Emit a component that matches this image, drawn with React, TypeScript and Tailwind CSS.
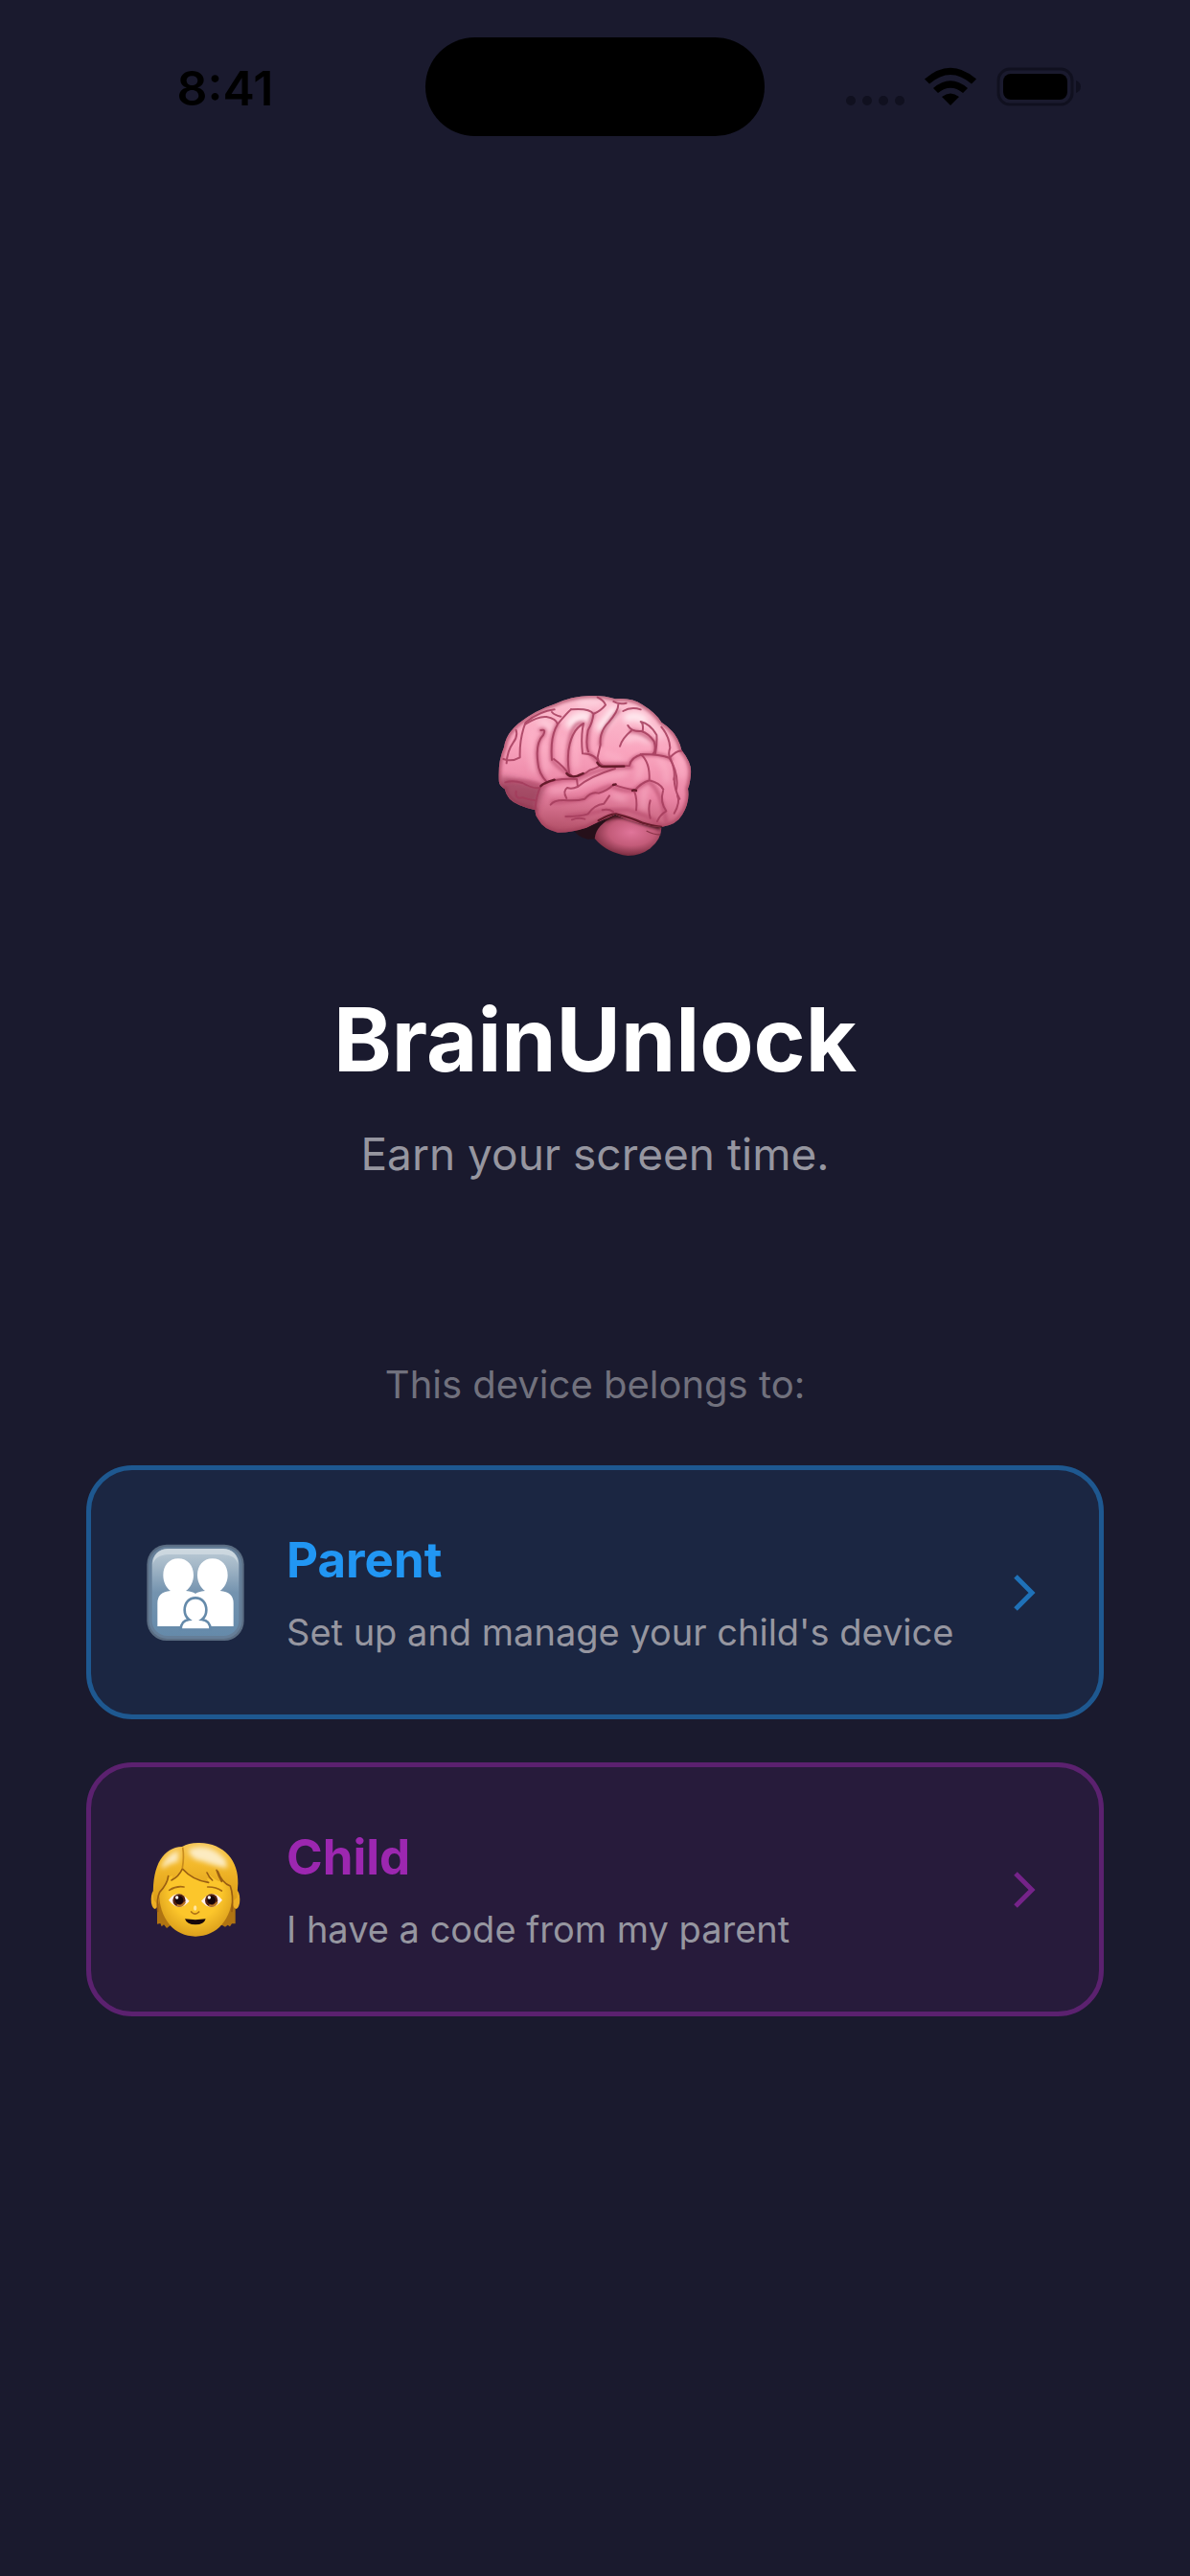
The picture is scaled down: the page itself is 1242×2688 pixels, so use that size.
import type { ReactNode } from "react";

const roles = [
  {
    id: "parent",
    title: "Parent",
    subtitle: "Set up and manage your child's device",
    icon: <FamilyIcon />,
    card: "border-[#1e5890] bg-[#1b2642]",
    titleColor: "text-[#2196f3]",
    chevronColor: "text-[#1f71b8]",
  },
  {
    id: "child",
    title: "Child",
    subtitle: "I have a code from my parent",
    icon: <ChildIcon />,
    card: "border-[#5b216f] bg-[#271b3b]",
    titleColor: "text-[#9c27b0]",
    chevronColor: "text-[#752389]",
  },
];

function StatusBar() {
  return (
    <header className="grid h-[180px] grid-cols-[1fr_354px_1fr] items-center text-black">
      <div className="pt-[3px] pl-[26px] text-center text-[50px] leading-[60px] font-semibold">8:41</div>
      <div className="h-[103px] rounded-full bg-black" />
      <div className="flex items-center justify-end pr-[113px]">
        <svg className="h-[42px] w-[248px]" viewBox="0 0 248 42" aria-hidden="true">
          {/* Signal */}
          <g fill="#10101f">
            <circle cx="7" cy="36" r="5" />
            <circle cx="24" cy="36" r="5" />
            <circle cx="41" cy="36" r="5" />
            <circle cx="58" cy="36" r="5" />
          </g>
          {/* Wifi */}
          <path d="M84 13.500Q111 -10 138 13.500L133 18.500Q111 -0.500 89 18.500Z" />
          <path d="M93 23Q111 7.500 129 23L124 28Q111 17.500 98 28Z" />
          <path d="M102 32Q111 25 120 32L111 41Z" />
          {/* Battery */}
          <rect x="161" y="3" width="77" height="37" rx="12" fill="none" stroke="#10101f" strokeWidth="3" />
          <rect x="166" y="8" width="67" height="27" rx="8" />
          <path d="M242 15Q247 17 247 21.500Q247 26 242 28Z" fill="#10101f" />
        </svg>
      </div>
    </header>
  );
}

function BrainIcon() {
  return (
    <svg className="h-[170px] w-[204px]" viewBox="61 74 612 510" role="img" aria-label="Brain">
      <defs>
        <linearGradient id="cortex" x1="0.55" y1="0" x2="0.45" y2="1">
          <stop offset="0" stopColor="#fcc3d3" />
          <stop offset="0.35" stopColor="#f9a3bd" />
          <stop offset="0.6" stopColor="#ea85a5" />
          <stop offset="0.82" stopColor="#b9566f" />
          <stop offset="1" stopColor="#7d2f43" />
        </linearGradient>
        <radialGradient id="cerebellum" cx="0.55" cy="0.4" r="0.62">
          <stop offset="0" stopColor="#e0759a" />
          <stop offset="0.55" stopColor="#c35b79" />
          <stop offset="1" stopColor="#74283b" />
        </radialGradient>
        <filter id="soft" x="-30%" y="-30%" width="160%" height="160%">
          <feGaussianBlur stdDeviation="9" />
        </filter>
        <filter id="softer" x="-30%" y="-30%" width="160%" height="160%">
          <feGaussianBlur stdDeviation="5" />
        </filter>
        <filter id="fold" x="-10%" y="-10%" width="120%" height="120%">
          <feGaussianBlur stdDeviation="2" />
        </filter>
        <clipPath id="cortexClip">
          <path d="M66 345Q62 285 82 238Q88 196 128 163Q180 122 240 103Q295 78 350 77Q400 76 430 87Q482 82 515 105Q556 130 575 160Q625 190 638 247Q672 290 667 322Q665 350 658 368Q665 410 640 450Q622 482 575 488Q510 485 430 448Q380 470 340 490Q290 506 250 505Q205 495 190 465Q178 450 180 435Q120 420 100 400Q85 380 86 370Q68 360 66 345Z" />
        </clipPath>
      </defs>
      <path d="M300 495Q310 520 345 526L385 525L430 450L350 470Z" fill="#26101a" />
      <path d="M366 524Q370 480 430 455Q505 460 575 490Q575 525 540 555Q510 578 470 578Q405 570 366 524Z" fill="url(#cerebellum)" />
      <path d="M400 465Q430 445 480 462Q530 480 572 490" stroke="#4a1520" strokeWidth="13" fill="none" filter="url(#softer)" />
      <path d="M528 500Q550 512 572 512" stroke="#8b3549" strokeWidth="4" fill="none" />
      <g clipPath="url(#cortexClip)">
        <rect x="60" y="70" width="620" height="515" fill="url(#cortex)" />
        {/* Edge shade */}
        <path d="M66 345Q62 285 82 238Q88 196 128 163Q180 122 240 103Q295 78 350 77Q400 76 430 87Q482 82 515 105Q556 130 575 160Q625 190 638 247Q672 290 667 322Q665 350 658 368Q665 410 640 450Q622 482 575 488Q510 485 430 448Q380 470 340 490Q290 506 250 505Q205 495 190 465Q178 450 180 435Q120 420 100 400Q85 380 86 370Q68 360 66 345Z" fill="none" stroke="#a43f5c" strokeWidth="17" opacity="0.65" filter="url(#softer)" />
        <path d="M70 330Q140 340 210 360L180 440Q100 430 75 370Z" fill="#7c2b43" opacity="0.6" filter="url(#soft)" />
        {/* Highlights */}
        <g fill="none" stroke="#ffe9ef" strokeLinecap="round" filter="url(#soft)">
          <path d="M290 165Q310 135 340 142M385 175L425 125M470 145Q500 135 520 152" strokeWidth="30" />
          <path d="M195 160Q225 155 228 185M320 100L380 98M465 215Q505 195 530 220M540 165L575 205" strokeWidth="14" opacity="0.65" />
        </g>
        <g fill="none" stroke="#ffc0d2" strokeLinecap="round" filter="url(#soft)" opacity="0.6">
          <path d="M170 190Q160 250 175 310M210 230L215 310M263 210L262 280M305 210L308 300M400 260L450 275M230 375Q320 365 365 340L460 320" strokeWidth="14" />
          <path d="M510 285Q515 315 500 335M570 280Q595 300 590 345M525 370Q515 400 520 430M425 390L460 400M635 275L640 330" strokeWidth="14" />
        </g>
        {/* Shadow beside the folds */}
        <g fill="none" stroke="#b54a6b" strokeWidth="14" strokeLinecap="round" strokeLinejoin="round" opacity="0.55" filter="url(#softer)">
          <path d="M95 345Q150 340 205 362Q245 335 310 338Q380 300 480 300" />
          <path d="M197 185Q215 180 205 200Q180 225 188 285Q190 320 217 348" />
          <path d="M250 166Q226 205 232 278Q250 300 286 325Q275 260 292 200Q305 155 331 164" />
          <path d="M362 134Q337 200 346 252L380 290Q380 295 475 292Q480 270 515 262Q570 255 605 275" />
          <path d="M480 187Q512 188 552 220Q560 250 548 260M384 230Q380 190 440 125" />
          <path d="M235 410Q280 410 330 400Q370 375 415 360Q470 380 490 372Q520 350 537 345" />
          <path d="M590 470Q570 370 540 350M280 455Q340 450 400 435L470 435Q530 450 570 480" />
        </g>
        {/* Folds */}
        <g fill="none" stroke="#a43c5c" strokeWidth="6" strokeLinecap="round" strokeLinejoin="round" opacity="0.85" filter="url(#fold)">
          <path d="M80 275Q105 285 132 270Q130 210 150 160Q195 125 240 120M120 185Q126 205 110 225Q92 250 90 288" />
          <path d="M197 185Q215 180 205 200Q180 225 188 285Q190 320 217 348" />
          <path d="M150 165Q190 140 215 143Q245 148 250 166Q226 205 232 278M250 166Q280 130 292 120M232 128Q240 138 260 142" />
          <path d="M238 275Q272 300 286 325" />
          <path d="M331 164Q300 180 288 228Q278 265 286 320Q305 345 350 310Q385 300 382 292M331 164Q322 205 328 258Q370 258 382 292" />
          <path d="M292 120Q350 115 362 134Q385 125 400 106Q395 92 375 82M362 134Q360 160 345 185Q337 230 346 252" />
          <path d="M440 105Q440 125 410 160Q380 190 384 230L375 270Q378 295 400 297L475 296Q478 270 515 260Q570 260 602 272Q620 310 614 340" />
          <path d="M425 95Q440 105 465 100M455 125Q480 110 510 120" />
          <path d="M470 170Q480 190 512 188Q535 195 552 220Q560 250 548 260" />
          <path d="M480 187Q452 210 445 235M516 188Q520 165 510 158Q540 165 560 200Q562 225 556 258" />
          <path d="M575 175Q600 205 602 240Q595 260 602 270Q625 245 640 250M600 272Q630 320 622 370" />
          <path d="M510 260Q540 285 537 342Q570 350 581 370M537 342Q510 350 490 376Q500 400 496 435M615 335Q615 370 632 400" />
          <path d="M86 348Q110 340 140 350Q175 370 195 365Q183 390 180 430M120 376Q115 402 142 396Q163 404 183 405" />
          <path d="M212 352Q240 335 310 338L313 362Q350 330 430 305M312 362Q295 370 280 365Q265 375 278 398" />
          <path d="M228 418Q240 403 270 404Q310 407 335 400Q355 375 378 382Q404 375 425 355Q460 368 490 372" />
          <path d="M275 455Q320 455 345 447Q365 418 395 415L412 390M295 465Q315 457 335 463M390 435Q410 430 424 440" />
          <path d="M540 405Q532 430 540 460M580 375Q570 410 590 438Q570 450 562 470M625 390Q635 410 615 445" />
        </g>
        {/* Deep creases */}
        <g fill="none" stroke="#651a2c" strokeWidth="7" strokeLinecap="round" strokeLinejoin="round" filter="url(#fold)">
          <path d="M197 360Q205 350 240 340M278 320Q290 335 312 328L330 320M374 286Q381 300 398 299L458 298" />
          <path d="M424 356L432 354M484 374Q490 370 496 374" />
          <path d="M378 468Q410 448 432 447Q480 458 515 475Q540 483 575 488" />
        </g>
      </g>
    </svg>
  );
}

function FamilyIcon() {
  return (
    <svg className="h-[102px] w-[104px]" viewBox="34 34 312 306" aria-hidden="true">
      <defs>
        <linearGradient id="tile" x1="0" y1="0" x2="0" y2="1">
          <stop offset="0" stopColor="#bccbd6" />
          <stop offset="0.2" stopColor="#a3b7c7" />
          <stop offset="0.5" stopColor="#7493af" />
          <stop offset="1" stopColor="#658aaa" />
        </linearGradient>
      </defs>
      <rect x="38" y="36" width="304" height="301" rx="62" fill="#5a6c82" />
      <rect x="44" y="42" width="292" height="289" rx="58" fill="#657e98" />
      <rect x="54" y="49" width="272" height="273" rx="48" fill="url(#tile)" />
      <path d="M57 98Q58 52 105 50H275Q322 52 323 98Q318 70 275 67H105Q64 69 57 98Z" fill="#d3dce3" opacity="0.75" />
      <g fill="#fff">
        <path d="M136 80C166 80 184 103 184 132C184 153 174 171 160 181Q183 184 190 190Q197 184 220 181C206 171 196 153 196 132C196 103 214 80 243 80C273 80 291 103 291 132C291 153 281 171 267 181Q309 184 309 219V292H71V219Q71 184 112 181C98 171 89 153 89 132C89 103 107 80 136 80Z" />
        <path d="M190 203C210 203 224 218 224 241C224 254 218 265 210 271Q237 274 237 303H144Q144 274 170 271C162 265 156 254 156 241C156 218 170 203 190 203Z" stroke="#658aaa" strokeWidth="8" />
      </g>
      <path d="M138 302H242" stroke="#658aaa" strokeWidth="3" />
    </svg>
  );
}

function ChildIcon() {
  return (
    <svg className="h-[104px] w-[104px]" viewBox="34 42 312 312" aria-hidden="true">
      <defs>
        <radialGradient id="face" cx="0.5" cy="0.42" r="0.58">
          <stop offset="0.6" stopColor="#fcc62b" />
          <stop offset="1" stopColor="#dca01c" />
        </radialGradient>
        <linearGradient id="hair" x1="0" y1="0" x2="0" y2="1">
          <stop offset="0" stopColor="#f6c655" />
          <stop offset="0.35" stopColor="#f3b92b" />
          <stop offset="1" stopColor="#d99a16" />
        </linearGradient>
        <filter id="shine" x="-30%" y="-30%" width="160%" height="160%">
          <feGaussianBlur stdDeviation="8" />
        </filter>
      </defs>
      {/* Back hair and ears */}
      <path d="M70 200V305L80 303L84 313L91 307L100 318L112 309H274L283 314L291 308L298 313L304 304H315V200Z" fill="#b07412" />
      <ellipse cx="63" cy="228" rx="12" ry="30" fill="#edaf25" />
      <ellipse cx="317" cy="228" rx="12" ry="30" fill="#edaf25" />
      <path d="M76 205Q76 110 150 94L250 98Q306 120 306 205C306 290 257 344 190 344C124 344 76 290 76 205Z" fill="url(#face)" />
      {/* Front hair */}
      <path d="M58 215C55 120 90 65 148 63Q170 50 202 51C282 52 326 110 323 178L320 222L309 232Q307 195 295 182Q272 174 260 136Q260 155 272 173Q250 170 227 144Q230 158 242 168Q233 164 226 162L231 175Q185 166 149 133Q137 157 114 169L119 153Q105 160 103 156Q100 181 76 205L72 245L60 230Z" fill="url(#hair)" />
      <path d="M72 265Q68 225 78 205Q102 180 105 155M115 168Q138 157 149 132Q181 168 231 175M226 144Q232 158 243 168M256 136Q262 156 272 172M260 140Q273 176 299 186Q310 215 304 265" fill="none" stroke="#9a5e12" strokeWidth="5" strokeLinecap="round" strokeLinejoin="round" />
      <path d="M150 65Q155 95 149 130" fill="none" stroke="#c98c1c" strokeWidth="5" />
      <path d="M85 120Q105 83 137 76L135 110Q110 113 85 132ZM168 72Q230 46 284 103L290 130Q240 120 210 107Q174 104 168 72Z" fill="#fcebc1" filter="url(#shine)" />
      {/* Face */}
      <path d="M108 199Q130 185 154 189M228 189Q253 188 272 201" fill="none" stroke="#a66a13" strokeWidth="5" strokeLinecap="round" />
      <path d="M106 230Q135 190 171 233Q138 272 106 230ZM208 233Q243 190 274 230Q240 272 208 233Z" fill="#fff0ea" />
      <circle cx="139" cy="231" r="20" fill="#56220f" />
      <circle cx="240" cy="231" r="20" fill="#56220f" />
      <path d="M132 246Q148 253 157 236M233 246Q249 253 258 236" fill="none" stroke="#bd7825" strokeWidth="6" />
      <circle cx="139" cy="230" r="13" fill="#160509" />
      <circle cx="240" cy="230" r="13" fill="#160509" />
      <circle cx="132" cy="222" r="5" fill="#fff" />
      <circle cx="233" cy="222" r="5" fill="#fff" />
      <ellipse cx="189" cy="255" rx="5" ry="8" fill="#ffe6a0" />
      <path d="M177 267Q188 280 201 267" fill="none" stroke="#ae7116" strokeWidth="5" strokeLinecap="round" />
      <path d="M157 289Q190 294 222 289Q217 307 190 307Q163 307 157 289Z" fill="#17070c" />
    </svg>
  );
}

type RoleCardProps = {
  title: string;
  subtitle: string;
  icon: ReactNode;
  card: string;
  titleColor: string;
  chevronColor: string;
};

function RoleCard({ title, subtitle, icon, card, titleColor, chevronColor }: RoleCardProps) {
  return (
    <button
      type="button"
      className={`flex w-full items-center gap-[43px] rounded-[48px] border-[5px] px-[57px] pt-[64px] pb-[62px] text-left ${card}`}
    >
      <span className="shrink-0">{icon}</span>
      <span className="flex flex-1 flex-col gap-[21px]">
        <span className={`text-[51px] leading-[60px] font-bold ${titleColor}`}>{title}</span>
        <span className="text-[38px] leading-[48px] text-[#9696a0]">{subtitle}</span>
      </span>
      <svg className={`h-[42px] w-[36px] shrink-0 ${chevronColor}`} viewBox="0 0 36 42" aria-hidden="true">
        <path d="M6 4L23 21L6 38" fill="none" stroke="currentColor" strokeWidth="5" />
      </svg>
    </button>
  );
}

export default function App() {
  return (
    <div className="flex min-h-screen flex-col bg-[#1a1a2e] font-['Inter','Liberation_Sans',sans-serif]">
      <StatusBar />
      <main className="flex flex-1 flex-col items-center justify-center px-[90px] pb-[40px]">
        <BrainIcon />
        <h1 className="mt-[134px] text-[92px] leading-[112px] font-bold text-white">BrainUnlock</h1>
        <p className="mt-[35px] text-[46px] leading-[56px] text-[#9696a0]">Earn your screen time.</p>
        <p className="mt-[189px] text-[40px] leading-[48px] text-[#71717d]">This device belongs to:</p>

        {/* Role picker */}
        <div className="mt-[60px] flex w-full flex-col gap-[45px]">
          {roles.map(role => (
            <RoleCard key={role.id} {...role} />
          ))}
        </div>
      </main>
    </div>
  );
}
